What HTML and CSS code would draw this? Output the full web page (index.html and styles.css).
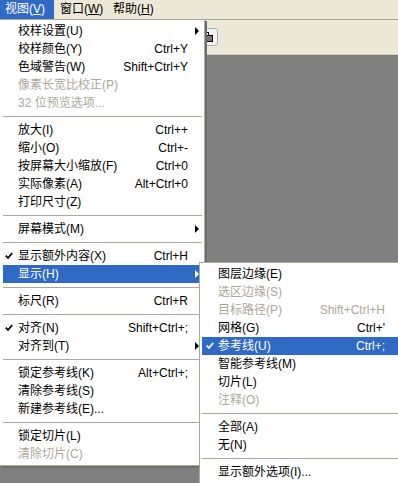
FILE: index.html
```html
<!DOCTYPE html>
<html>
<head>
  <title>视图菜单</title>
  <link rel="stylesheet" href="styles.css">
</head>
<body>
  <div class="app">
    <div class="menubar">
      <div class="bar-item open">视图(<u>V</u>)</div>
      <div class="bar-item">窗口(<u>W</u>)</div>
      <div class="bar-item">帮助(<u>H</u>)</div>
    </div>
    <div class="toolbar">
      <div class="tool-btn">
        <svg width="14" height="12" viewBox="0 0 14 12">
          <rect x="1.5" y="1.5" width="7" height="6" fill="#fff" stroke="#000"/>
          <rect x="5.5" y="4.5" width="7" height="6" fill="#777" stroke="#000"/>
        </svg>
      </div>
    </div>
    <div class="canvas"></div>

    <!-- main menu -->
    <div class="menu main-menu">
      <div class="item"><span class="check"></span><span class="label">校样设置(U)</span><span class="key"></span><span class="arrow"><i></i></span></div>
      <div class="item"><span class="check"></span><span class="label">校样颜色(Y)</span><span class="key">Ctrl+Y</span><span class="arrow"></span></div>
      <div class="item"><span class="check"></span><span class="label">色域警告(W)</span><span class="key">Shift+Ctrl+Y</span><span class="arrow"></span></div>
      <div class="item disabled"><span class="check"></span><span class="label">像素长宽比校正(P)</span><span class="key"></span><span class="arrow"></span></div>
      <div class="item disabled"><span class="check"></span><span class="label">32 位预览选项...</span><span class="key"></span><span class="arrow"></span></div>
      <div class="sep"></div>
      <div class="item"><span class="check"></span><span class="label">放大(I)</span><span class="key">Ctrl++</span><span class="arrow"></span></div>
      <div class="item"><span class="check"></span><span class="label">缩小(O)</span><span class="key">Ctrl+-</span><span class="arrow"></span></div>
      <div class="item"><span class="check"></span><span class="label">按屏幕大小缩放(F)</span><span class="key">Ctrl+0</span><span class="arrow"></span></div>
      <div class="item"><span class="check"></span><span class="label">实际像素(A)</span><span class="key">Alt+Ctrl+0</span><span class="arrow"></span></div>
      <div class="item"><span class="check"></span><span class="label">打印尺寸(Z)</span><span class="key"></span><span class="arrow"></span></div>
      <div class="sep"></div>
      <div class="item"><span class="check"></span><span class="label">屏幕模式(M)</span><span class="key"></span><span class="arrow"><i></i></span></div>
      <div class="sep"></div>
      <div class="item"><span class="check"><svg width="8" height="8" viewBox="0 0 8 8"><path d="M0.8 3.6 L3 6 L7.2 1" fill="none" stroke="currentColor" stroke-width="1.8"/></svg></span><span class="label">显示额外内容(X)</span><span class="key">Ctrl+H</span><span class="arrow"></span></div>
      <div class="item active"><span class="check"></span><span class="label">显示(H)</span><span class="key"></span><span class="arrow"><i></i></span></div>
      <div class="sep"></div>
      <div class="item"><span class="check"></span><span class="label">标尺(R)</span><span class="key">Ctrl+R</span><span class="arrow"></span></div>
      <div class="sep"></div>
      <div class="item"><span class="check"><svg width="8" height="8" viewBox="0 0 8 8"><path d="M0.8 3.6 L3 6 L7.2 1" fill="none" stroke="currentColor" stroke-width="1.8"/></svg></span><span class="label">对齐(N)</span><span class="key">Shift+Ctrl+;</span><span class="arrow"></span></div>
      <div class="item"><span class="check"></span><span class="label">对齐到(T)</span><span class="key"></span><span class="arrow"><i></i></span></div>
      <div class="sep"></div>
      <div class="item"><span class="check"></span><span class="label">锁定参考线(K)</span><span class="key">Alt+Ctrl+;</span><span class="arrow"></span></div>
      <div class="item"><span class="check"></span><span class="label">清除参考线(S)</span><span class="key"></span><span class="arrow"></span></div>
      <div class="item"><span class="check"></span><span class="label">新建参考线(E)...</span><span class="key"></span><span class="arrow"></span></div>
      <div class="sep"></div>
      <div class="item"><span class="check"></span><span class="label">锁定切片(L)</span><span class="key"></span><span class="arrow"></span></div>
      <div class="item disabled"><span class="check"></span><span class="label">清除切片(C)</span><span class="key"></span><span class="arrow"></span></div>
    </div>

    <!-- 显示 submenu -->
    <div class="menu sub-menu">
      <div class="item"><span class="check"></span><span class="label">图层边缘(E)</span><span class="key"></span><span class="arrow"></span></div>
      <div class="item disabled"><span class="check"></span><span class="label">选区边缘(S)</span><span class="key"></span><span class="arrow"></span></div>
      <div class="item disabled"><span class="check"></span><span class="label">目标路径(P)</span><span class="key">Shift+Ctrl+H</span><span class="arrow"></span></div>
      <div class="item"><span class="check"></span><span class="label">网格(G)</span><span class="key">Ctrl+'</span><span class="arrow"></span></div>
      <div class="item active"><span class="check"><svg width="8" height="8" viewBox="0 0 8 8"><path d="M0.8 3.6 L3 6 L7.2 1" fill="none" stroke="currentColor" stroke-width="1.8"/></svg></span><span class="label">参考线(U)</span><span class="key">Ctrl+;</span><span class="arrow"></span></div>
      <div class="item"><span class="check"></span><span class="label">智能参考线(M)</span><span class="key"></span><span class="arrow"></span></div>
      <div class="item"><span class="check"></span><span class="label">切片(L)</span><span class="key"></span><span class="arrow"></span></div>
      <div class="item disabled"><span class="check"></span><span class="label">注释(O)</span><span class="key"></span><span class="arrow"></span></div>
      <div class="sep"></div>
      <div class="item"><span class="check"></span><span class="label">全部(A)</span><span class="key"></span><span class="arrow"></span></div>
      <div class="item"><span class="check"></span><span class="label">无(N)</span><span class="key"></span><span class="arrow"></span></div>
      <div class="sep"></div>
      <div class="item"><span class="check"></span><span class="label">显示额外选项(I)...</span><span class="key"></span><span class="arrow"></span></div>
    </div>
  </div>
</body>
</html>
```

FILE: styles.css
```css
body {
  margin: 0;
  font-family: "Liberation Sans", "Noto Sans CJK SC", sans-serif;
  font-size: 12px;
  color: #000;
  background: #808080;
  overflow: hidden;
}
.app {
  position: relative;
  width: 398px;
  height: 483px;
  display: flex;
  flex-direction: column;
  overflow: hidden;
}
.menubar {
  height: 19px;
  background: #ece9d8;
  display: flex;
}
.bar-item {
  line-height: 19px;
  width: 53px;
  padding-left: 6px;
  box-sizing: border-box;
  white-space: nowrap;
}
.bar-item.open {
  width: 54px;
  padding-left: 5px;
  background: #316ac5;
  color: #fff;
}
.toolbar {
  height: 34px;
  background: #ece9d8;
  border-top: 1px solid #aca899;
  border-bottom: 1px solid #d8d4c4;
  position: relative;
}
.tool-btn {
  position: absolute;
  left: 196px;
  top: 8px;
  width: 20px;
  height: 16px;
  border: 1px solid #9db1c9;
  border-radius: 3px;
  background: #f4f3ee;
  display: flex;
  align-items: center;
  justify-content: center;
}
.canvas {
  flex: 1;
  background: #808080;
}
.menu {
  position: absolute;
  background: #fff;
  border: 1px solid #aca899;
  padding: 2px;
  box-shadow: 2px 2px 0 #6e6e6e;
}
.main-menu {
  left: 0;
  top: 19px;
  width: 199px;
  border-left: none;
  padding-left: 3px;
}
.sub-menu {
  left: 199px;
  top: 262px;
  width: 200px;
  padding-bottom: 6px;
}
.item {
  display: flex;
  height: 18px;
  line-height: 19px;
  white-space: nowrap;
}
.item.disabled {
  color: #aca899;
}
.item.active {
  background: #316ac5;
  color: #fff;
}
.check {
  width: 15px;
  display: flex;
  align-items: center;
  padding-left: 2px;
  box-sizing: border-box;
}
.sub-menu .check {
  width: 16px;
  padding-left: 4px;
}
.label {
  flex: 1;
}
.key {
  text-align: right;
}
.arrow {
  width: 14px;
  display: flex;
  align-items: center;
  justify-content: flex-end;
  padding-right: 3px;
  box-sizing: border-box;
}
.sub-menu .arrow {
  width: 17px;
}
.arrow i {
  display: block;
  border-left: 4px solid currentColor;
  border-top: 4px solid transparent;
  border-bottom: 4px solid transparent;
}
.sep {
  height: 9px;
  display: flex;
  align-items: center;
}
.sep::before {
  content: "";
  flex: 1;
  height: 1px;
  background: #aca899;
}
```
